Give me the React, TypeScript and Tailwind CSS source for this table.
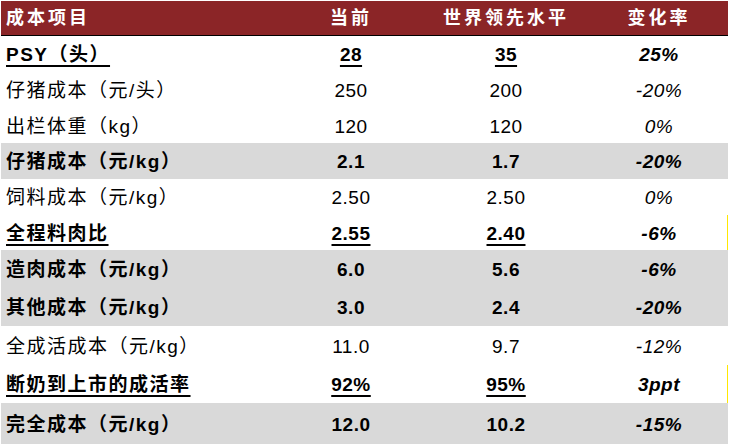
import React from "react";

type Row = {
  name: string;
  cur: string;
  best: string;
  rate: string;
  bold?: boolean;
  underline?: boolean;
  gray?: boolean;
  edge?: boolean;
  h: string;
};

const ROWS: Row[] = [
  { name: "PSY（头）", cur: "28", best: "35", rate: "25%", bold: true, underline: true, h: "h-[36px]" },
  { name: "仔猪成本（元/头）", cur: "250", best: "200", rate: "-20%", h: "h-[36px]" },
  { name: "出栏体重（kg）", cur: "120", best: "120", rate: "0%", h: "h-[35px]" },
  { name: "仔猪成本（元/kg）", cur: "2.1", best: "1.7", rate: "-20%", bold: true, gray: true, h: "h-[36px]" },
  { name: "饲料成本（元/kg）", cur: "2.50", best: "2.50", rate: "0%", h: "h-[36px]" },
  { name: "全程料肉比", cur: "2.55", best: "2.40", rate: "-6%", bold: true, underline: true, edge: true, h: "h-[35px]" },
  { name: "造肉成本（元/kg）", cur: "6.0", best: "5.6", rate: "-6%", bold: true, gray: true, h: "h-[38px]" },
  { name: "其他成本（元/kg）", cur: "3.0", best: "2.4", rate: "-20%", bold: true, gray: true, h: "h-[38px]" },
  { name: "全成活成本（元/kg）", cur: "11.0", best: "9.7", rate: "-12%", h: "h-[39px]" },
  { name: "断奶到上市的成活率", cur: "92%", best: "95%", rate: "3ppt", bold: true, underline: true, edge: true, h: "h-[38px]" },
  { name: "完全成本（元/kg）", cur: "12.0", best: "10.2", rate: "-15%", bold: true, gray: true, h: "h-[41px]" },
];

const font = { fontFamily: '"Liberation Sans", "Noto Sans CJK SC", sans-serif' };
const ul = "underline decoration-2 underline-offset-[4px]";

export default function App() {
  return (
    <div className="w-[729px] h-[444px] bg-white overflow-hidden pl-px text-black" style={font}>
      <div className="w-[727px]">
        <div className="grid grid-cols-[300px_100px_210px_96px_1fr] items-center h-[35px] mt-px pt-px bg-[#8b2527] text-white font-bold text-[18px] tracking-[3px] border-b-[1.5px] border-black">
          <div className="pl-[5px]">成本项目</div>
          <div className="text-center">当前</div>
          <div className="text-center">世界领先水平</div>
          <div className="text-center">变化率</div>
          <div />
        </div>
        {ROWS.map((r) => (
          <div
            key={r.name}
            className={`grid grid-cols-[300px_100px_210px_96px_1fr] items-center pt-[3px] text-[19px] ${r.h} ${r.gray ? "bg-[#d9d9d9]" : ""} ${r.edge ? "border-r border-[#ffe800]" : ""} ${r.bold ? "font-bold" : ""}`}
          >
            <div className="pl-[5px] tracking-[1.5px]">
              <span className={r.underline ? ul : ""}>{r.name}</span>
            </div>
            <div className="text-center tracking-[0.5px]">
              <span className={r.underline ? ul : ""}>{r.cur}</span>
            </div>
            <div className="text-center tracking-[0.5px]">
              <span className={r.underline ? ul : ""}>{r.best}</span>
            </div>
            <div className="text-center italic tracking-[0.5px]">{r.rate}</div>
            <div />
          </div>
        ))}
      </div>
    </div>
  );
}
